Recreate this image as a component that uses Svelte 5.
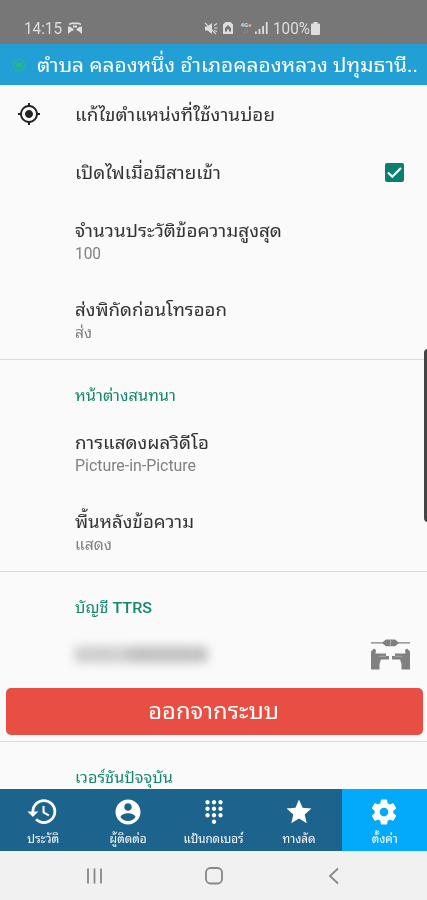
<script lang="ts">
  type Tab = {
    label: string;
    icon: string;
    width: number;
  };

  const tabs: Tab[] = [
    { label: "ประวัติ", icon: "history", width: 32 },
    { label: "ผู้ติดต่อ", icon: "person", width: 37 },
    { label: "แป้นกดเบอร์", icon: "dialpad", width: 60 },
    { label: "ทางลัด", icon: "star", width: 33 },
    { label: "ตั้งค่า", icon: "settings", width: 26 },
  ];

  const paths: Record<string, string> = {
    history:
      "M13 3a9 9 0 0 0-9 9H1l3.89 3.89.07.14L9 12H6c0-3.87 3.13-7 7-7s7 3.13 7 7-3.13 7-7 7c-1.93 0-3.68-.79-4.94-2.06l-1.42 1.42A8.954 8.954 0 0 0 13 21a9 9 0 0 0 0-18zm-1 5v5l4.28 2.54.72-1.21-3.5-2.08V8H12z",
    person:
      "M12 2C6.48 2 2 6.48 2 12s4.48 10 10 10 10-4.48 10-10S17.52 2 12 2zm0 3c1.66 0 3 1.34 3 3s-1.34 3-3 3-3-1.34-3-3 1.34-3 3-3zm0 14.2a7.2 7.2 0 0 1-6-3.22c.03-1.99 4-3.08 6-3.08 1.99 0 5.97 1.09 6 3.08a7.2 7.2 0 0 1-6 3.22z",
    dialpad:
      "M12 19c-1.1 0-2 .9-2 2s.9 2 2 2 2-.9 2-2-.9-2-2-2zM6 1c-1.1 0-2 .9-2 2s.9 2 2 2 2-.9 2-2-.9-2-2-2zm0 6c-1.1 0-2 .9-2 2s.9 2 2 2 2-.9 2-2-.9-2-2-2zm0 6c-1.1 0-2 .9-2 2s.9 2 2 2 2-.9 2-2-.9-2-2-2zm12-8c1.1 0 2-.9 2-2s-.9-2-2-2-2 .9-2 2 .9 2 2 2zm-6 8c-1.1 0-2 .9-2 2s.9 2 2 2 2-.9 2-2-.9-2-2-2zm6 0c-1.1 0-2 .9-2 2s.9 2 2 2 2-.9 2-2-.9-2-2-2zm0-6c-1.1 0-2 .9-2 2s.9 2 2 2 2-.9 2-2-.9-2-2-2zm-6 0c-1.1 0-2 .9-2 2s.9 2 2 2 2-.9 2-2-.9-2-2-2zm0-6c-1.1 0-2 .9-2 2s.9 2 2 2 2-.9 2-2-.9-2-2-2z",
    star: "M12 17.27L18.18 21l-1.64-7.03L22 9.24l-7.19-.61L12 2 9.19 8.63 2 9.24l5.46 4.73L5.82 21z",
    settings:
      "M19.43 12.98c.04-.32.07-.64.07-.98s-.03-.66-.07-.98l2.11-1.65c.19-.15.24-.42.12-.64l-2-3.46c-.12-.22-.39-.3-.61-.22l-2.49 1c-.52-.4-1.08-.73-1.69-.98l-.38-2.65C14.46 2.18 14.25 2 14 2h-4c-.25 0-.46.18-.49.42l-.38 2.65c-.61.25-1.17.59-1.69.98l-2.49-1c-.23-.09-.49 0-.61.22l-2 3.46c-.13.22-.07.49.12.64l2.11 1.65c-.04.32-.07.65-.07.98s.03.66.07.98l-2.11 1.65c-.19.15-.24.42-.12.64l2 3.46c.12.22.39.3.61.22l2.49-1c.52.4 1.08.73 1.69.98l.38 2.65c.03.24.24.42.49.42h4c.25 0 .46-.18.49-.42l.38-2.65c.61-.25 1.17-.59 1.69-.98l2.49 1c.23.09.49 0 .61-.22l2-3.46c.12-.22.07-.49-.12-.64l-2.11-1.65zM12 15.5c-1.93 0-3.5-1.57-3.5-3.5s1.57-3.5 3.5-3.5 3.5 1.57 3.5 3.5-1.57 3.5-3.5 3.5z",
  };

  let active = $state("settings");
  let flashOnCall = $state(true);

  // scales a line of text so that it fills the given width
  const fit = (node: HTMLElement, width: number) => {
    const natural = node.getBoundingClientRect().width;
    if (natural > 0) {
      node.style.transform = `scaleX(${width / natural})`;
    }
  };
</script>

{#snippet pref(title: string, width: number, summary: string, summaryWidth: number)}
  <div class="pref">
    <p class="title"><span use:fit={width}>{title}</span></p>
    <p class="summary"><span use:fit={summaryWidth}>{summary}</span></p>
  </div>
{/snippet}

<div class="screen">
  <div class="status">
    <span class="time"><span use:fit={38}>14:15</span></span>
    <svg class="app-icon" viewBox="0 0 14 12">
      <path d="M1 3V1.500L3.500.5h7L13 1.500V3l-3-.8H4zM0 4.500l2.500.3L5.500 7v1.500L3.500 9 0 12zM14 4.500l-2.500.3L8.500 7v1.500l2 .5 3.500 3zM5 3.500h4v2H5z" />
    </svg>
    <svg class="mute" viewBox="0 0 14 13">
      <path d="M1 4.500h2.500L8 1v11L3.500 8.500H1z" />
      <path class="line" d="M1 .8l11 11.400M10 3.500l3-2M10 6h3.500M10.500 8.500l2.500 1" />
    </svg>
    <svg class="card" viewBox="0 0 10 12">
      <path fill-rule="evenodd" d="M2.500 0h5L10 2.500V12H0V2.500zM5 3L2 6v3.500h2V7.500h2v2h2V6z" />
    </svg>
    <span class="network"><b>4G+</b><i>↓↑</i></span>
    <svg class="signal" viewBox="0 0 13 12">
      <path d="M0 9.500h1.800V12H0zM3.600 7h1.800v5H3.600zM7.200 4H9v8H7.200zM10.800 0h1.800v12h-1.800z" />
    </svg>
    <span class="percent"><span use:fit={37}>100%</span></span>
    <svg class="battery" viewBox="0 0 9 13">
      <path d="M2.500 0h4v1.500H8a1 1 0 0 1 1 1V12a1 1 0 0 1-1 1H1a1 1 0 0 1-1-1V2.500a1 1 0 0 1 1-1h1.500z" />
    </svg>
  </div>

  <header>
    <svg class="gps" viewBox="0 0 14 14">
      <circle cx="7" cy="7" r="5.700" />
      <circle class="dot" cx="7" cy="7" r="2.700" />
    </svg>
    <h1><span use:fit={381}>ตำบล คลองหนึ่ง อำเภอคลองหลวง ปทุมธานี..</span></h1>
  </header>

  <main>
    <div class="pref single">
      <svg class="locate" viewBox="0 0 24 24">
        <path
          d="M12 8c-2.210 0-4 1.790-4 4s1.790 4 4 4 4-1.790 4-4-1.790-4-4-4zm8.940 3A8.994 8.994 0 0 0 13 3.060V1h-2v2.060A8.994 8.994 0 0 0 3.060 11H1v2h2.060A8.994 8.994 0 0 0 11 20.940V23h2v-2.060A8.994 8.994 0 0 0 20.940 13H23v-2h-2.060zM12 19c-3.870 0-7-3.130-7-7s3.130-7 7-7 7 3.130 7 7-3.130 7-7 7z"
        />
      </svg>
      <p class="title"><span use:fit={200}>แก้ไขตำแหน่งที่ใช้งานบ่อย</span></p>
    </div>
    <div class="pref single">
      <p class="title"><span use:fit={146}>เปิดไฟเมื่อมีสายเข้า</span></p>
      <button
        class="checkbox"
        class:checked={flashOnCall}
        aria-label="เปิดไฟเมื่อมีสายเข้า"
        onclick={() => (flashOnCall = !flashOnCall)}
      >
        <svg viewBox="0 0 19 19"><path d="M3 9.500l4.300 4.300L16 5" /></svg>
      </button>
    </div>
    {@render pref("จำนวนประวัติข้อความสูงสุด", 207, "100", 26)}
    {@render pref("ส่งพิกัดก่อนโทรออก", 152, "ส่ง", 17)}

    <section>
      <h2><span use:fit={101}>หน้าต่างสนทนา</span></h2>
      {@render pref("การแสดงผลวิดีโอ", 134, "Picture-in-Picture", 121)}
      {@render pref("พื้นหลังข้อความ", 119, "แสดง", 37)}
    </section>

    <section>
      <h2><span use:fit={77}>บัญชี <b>TTRS</b></span></h2>
      <div class="account">
        <div class="hidden-number"></div>
        <svg class="ttrs" viewBox="0 0 39 31">
          <path d="M0 3.200h11.500L15 .5h9l3.500 2.700H39v1.300H27.500L24 7.300h-9l-3.500-2.800H0z" />
          <path d="M0 12.500L3 9.500l2 1.500-.5 3.500H15V17h3v3.500h-8L8.500 25v5.500H0z" />
          <path d="M39 12.500l-3-3-2 1.500.5 3.500H24V17h-3v3.500h8l1.500 4.500v5.500H39z" />
          <path class="gap" d="M19.500.5v6.800M7.500 17.300H15M24 17.300h7.500" />
        </svg>
      </div>
      <button class="logout"><span use:fit={131}>ออกจากระบบ</span></button>
    </section>

    <section>
      <h2><span use:fit={98}>เวอร์ชันปัจจุบัน</span></h2>
    </section>
  </main>

  <nav class="tabs">
    {#each tabs as tab}
      <button class:active={active === tab.icon} onclick={() => (active = tab.icon)}>
        <svg class={tab.icon} viewBox="0 0 24 24"><path d={paths[tab.icon]} /></svg>
        <span class="label"><span use:fit={tab.width}>{tab.label}</span></span>
      </button>
    {/each}
  </nav>

  <div class="system">
    <svg viewBox="0 0 20 20"><path d="M4 2.500v15M10.500 2.500v15M17 2.500v15" /></svg>
    <svg viewBox="0 0 20 20"><rect x="2" y="2" width="16" height="15.500" rx="4.500" /></svg>
    <svg viewBox="0 0 20 20"><path d="M14 2.500L6 10l8 7.500" /></svg>
  </div>

  <div class="edge"></div>
</div>

<style>
  :global(body) {
    margin: 0;
  }
  .screen {
    position: relative;
    display: flex;
    flex-direction: column;
    width: 427px;
    height: 900px;
    overflow: hidden;
    background: #fafafa;
    font-family: Roboto, "Noto Sans Thai Looped", "Loma", "Waree", "Noto Sans Thai", "Noto Sans", sans-serif;
  }
  .screen * {
    box-sizing: border-box;
  }
  p,
  h1,
  h2 {
    margin: 0;
    font-weight: 400;
    white-space: nowrap;
  }
  p span,
  h1 span,
  h2 span,
  .time span,
  .percent span {
    display: inline-block;
    transform-origin: left center;
  }
  button {
    border: 0;
    padding: 0;
    font-family: inherit;
    cursor: pointer;
  }
  svg {
    display: block;
    flex: none;
  }
  .status {
    display: flex;
    align-items: center;
    flex: none;
    height: 44px;
    padding: 12px 0 0 24px;
    background: #777;
    color: #dedede;
    font-size: 16.5px;
    line-height: 20px;
    fill: #dedede;
  }
  .time {
    width: 44px;
    padding-top: 1px;
  }
  .app-icon {
    width: 14px;
    height: 12px;
    margin-right: 122px;
  }
  .mute {
    width: 14px;
    height: 13px;
    margin-right: 5px;
  }
  .line {
    fill: none;
    stroke: #dedede;
    stroke-width: 1.2;
  }
  .card {
    width: 10px;
    height: 12px;
    margin-right: 7px;
  }
  .network {
    display: flex;
    flex-direction: column;
    align-items: center;
    width: 12px;
    margin-right: 3px;
    font-size: 6px;
    line-height: 6px;
  }
  .network i {
    font-size: 6px;
    font-style: normal;
    opacity: 0.5;
  }
  .signal {
    width: 13px;
    height: 12px;
    margin-right: 5px;
  }
  .percent {
    width: 38px;
    padding-top: 1px;
  }
  .battery {
    width: 9px;
    height: 13px;
  }
  header {
    display: flex;
    align-items: center;
    flex: none;
    height: 41px;
    padding-left: 12px;
    background: #22a0d6;
  }
  .gps {
    width: 14px;
    height: 14px;
    margin-right: 11px;
    fill: none;
    stroke: #20b98c;
    stroke-width: 1.3;
  }
  .gps .dot {
    fill: #22c070;
    stroke: none;
  }
  h1 {
    color: #fff;
    font-size: 20px;
    line-height: 30px;
  }
  main {
    flex: 1;
    min-height: 0;
    overflow: hidden;
  }
  .pref {
    height: 79px;
    padding: 17px 0 0 75px;
  }
  .single {
    display: flex;
    align-items: center;
    height: 58px;
    padding: 0 23px 0 75px;
  }
  .single .title {
    padding-top: 2px;
  }
  .title {
    flex: 1;
    color: #333;
    font-size: 18px;
    line-height: 26px;
  }
  .summary {
    color: #808080;
    font-size: 16px;
    line-height: 20px;
  }
  .locate {
    width: 24px;
    height: 24px;
    margin: 0 34px 0 -58px;
    fill: #222;
  }
  .checkbox {
    width: 19px;
    height: 19px;
    border-radius: 2px;
    background: #bbb;
  }
  .checkbox.checked {
    background: #08806f;
  }
  .checkbox path {
    fill: none;
    stroke: #fff;
    stroke-width: 2.2;
  }
  section {
    border-top: 1px solid #dcdcdc;
  }
  h2 {
    height: 53px;
    padding: 26px 0 0 75px;
    color: #16876f;
    font-size: 15px;
    line-height: 20px;
  }
  h2 b {
    font-weight: 500;
  }
  .account {
    display: flex;
    align-items: center;
    justify-content: space-between;
    height: 63px;
    padding: 0 17px 5px 74px;
  }
  .hidden-number {
    width: 134px;
    height: 17px;
    border-radius: 5px;
    background: linear-gradient(90deg, #d0d0d0, #cdcdcd 28%, #d6d6d6 32%, #c2c2c2 45%, #c4c4c4);
    filter: blur(5px);
  }
  .ttrs {
    width: 39px;
    height: 31px;
    fill: #808080;
  }
  .ttrs .gap {
    stroke: #b4b4b4;
    stroke-width: 0.8;
  }
  .logout {
    display: block;
    width: 417px;
    height: 47px;
    margin: 0 auto 6px 5.5px;
    border-radius: 5px;
    background: #e84e42;
    color: #fff;
    font-size: 22px;
    line-height: 30px;
  }
  .logout span {
    display: inline-block;
    padding-top: 1px;
  }
  .tabs {
    display: flex;
    flex: none;
    height: 62px;
    background: #1c638e;
  }
  .tabs button {
    display: flex;
    flex: 1;
    flex-direction: column;
    align-items: center;
    padding-top: 8px;
    background: none;
    color: #fff;
  }
  .tabs button.active {
    background: #03a9fb;
  }
  .tabs svg {
    width: 30px;
    height: 30px;
    fill: #fff;
  }
  .tabs .history {
    width: 33px;
    height: 33px;
    margin: -2px 0 -1px;
  }
  .tabs .dialpad {
    width: 26px;
    height: 26px;
    margin: 2px 0;
  }
  .label {
    display: flex;
    justify-content: center;
    width: 80px;
    margin-top: 4px;
    font-size: 11.5px;
    line-height: 16px;
    white-space: nowrap;
  }
  .system {
    display: flex;
    align-items: center;
    justify-content: center;
    flex: none;
    gap: 100px;
    height: 49px;
    background: #f1f1f1;
  }
  .system svg {
    width: 20px;
    height: 20px;
    fill: none;
    stroke: #888;
    stroke-width: 1.8;
  }
  .edge {
    position: absolute;
    top: 349px;
    right: -6px;
    width: 9px;
    height: 173px;
    border-radius: 4px;
    background: #444;
  }
</style>
